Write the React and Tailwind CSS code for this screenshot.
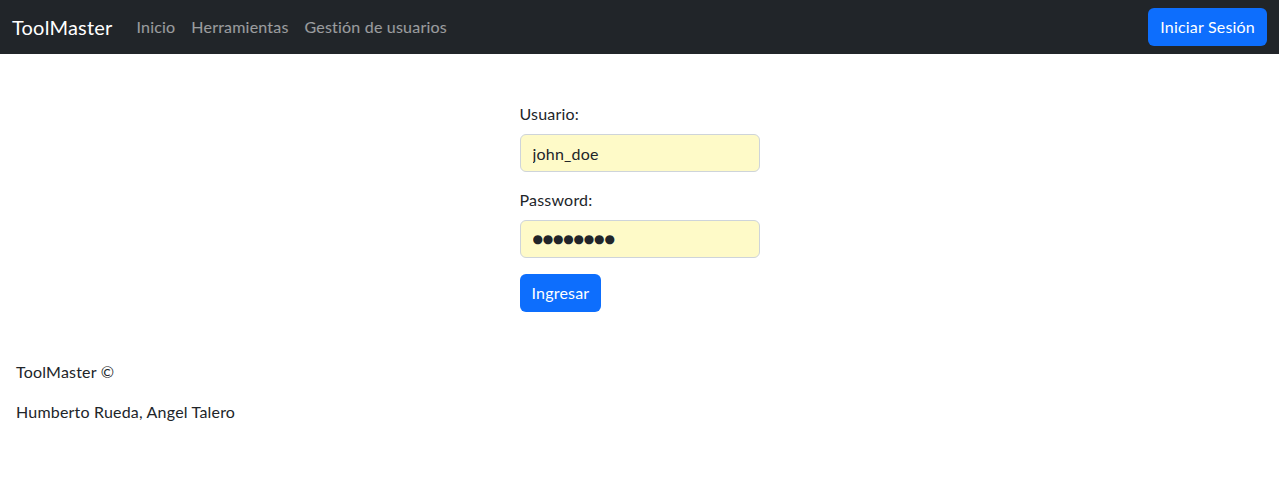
export default function App() {
  return (
    <div className="min-h-screen bg-white text-[#212529] font-['Lato',sans-serif] text-base tracking-[0.2px]">
      {/* Navbar */}
      <nav className="bg-[#212529] h-[54px] flex items-center justify-between px-3">
        <div className="flex items-center">
          <span className="text-white text-xl mr-4">ToolMaster</span>
          <a className="text-white/55 px-2">Inicio</a>
          <a className="text-white/55 px-2">Herramientas</a>
          <a className="text-white/55 px-2">Gestión de usuarios</a>
        </div>
        <button className="bg-[#0d6efd] text-white h-[38px] px-3 rounded-md">Iniciar Sesión</button>
      </nav>

      {/* Login form */}
      <div className="flex justify-center mt-12">
        <form className="w-[240px]" onSubmit={e => e.preventDefault()}>
          <div className="mb-4">
            <label className="block mb-2 leading-6">Usuario:</label>
            <input defaultValue="john_doe" className="w-full h-[38px] px-3 rounded-md border border-[#ced4da] bg-[#fefac8] outline-none tracking-[0.2px]" />
          </div>
          <div className="mb-4">
            <label className="block mb-2 leading-6">Password:</label>
            <input readOnly value="●●●●●●●●" className="w-full h-[38px] px-3 rounded-md border border-[#ced4da] bg-[#fefac8] outline-none font-['DejaVu_Sans',sans-serif] text-[12px] tracking-[-0.2px]" />
          </div>
          <button className="bg-[#0d6efd] text-white h-[38px] px-3 rounded-md">Ingresar</button>
        </form>
      </div>

      {/* Footer */}
      <footer className="px-4 mt-12">
        <p className="mb-4 leading-6">ToolMaster ©</p>
        <p className="mb-4 leading-6">Humberto Rueda, Angel Talero</p>
      </footer>
    </div>
  )
}
